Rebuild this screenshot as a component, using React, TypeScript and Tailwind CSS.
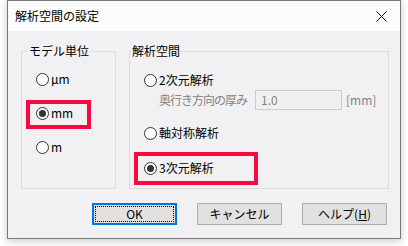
import React from 'react';

const font = { fontFamily: '"Noto Sans CJK JP", "Noto Sans", sans-serif' };

const Radio: React.FC<{ checked?: boolean; label: string }> = ({ checked = false, label }) => (
  <div className="flex items-center h-4">
    <span className="w-[13px] h-[13px] rounded-full border border-[#333333] bg-white flex items-center justify-center shrink-0">
      {checked && <span className="w-[7px] h-[7px] rounded-full bg-[#333333]" />}
    </span>
    <span className="ml-[2px] text-[12px] leading-4 text-black">{label}</span>
  </div>
);

const Button: React.FC<{ children: React.ReactNode; primary?: boolean }> = ({ children, primary }) => (
  <button
    className={`w-[85px] h-[22px] bg-[#e1e1e1] text-[12px] leading-4 text-black flex items-center justify-center ${
      primary ? 'border-2 border-[#0078d7] p-[1px]' : 'border border-[#adadad]'
    }`}
  >
    {primary ? (
      <span className="w-full h-full border border-dotted border-black flex items-center justify-center">{children}</span>
    ) : (
      children
    )}
  </button>
);

export default function App() {
  return (
    <div className="w-[408px] h-[246px] bg-white pl-[7px] overflow-hidden" style={font}>
      <div className="w-[394px] h-[239px] border border-[#7a7a7a] bg-[#f1f0f3] flex flex-col shadow-[0_2px_8px_rgba(0,0,0,0.22)]">
        {/* Title bar */}
        <div className="h-[30px] bg-[#fbfcfb] flex items-center justify-between pl-[7px] pr-[10px] shrink-0">
          <span className="text-[12px] leading-4 text-black">解析空間の設定</span>
          <svg width="11" height="11" viewBox="0 0 11 11" className="mr-[3px]">
            <path d="M0.5 0.5 L10.5 10.5 M10.5 0.5 L0.5 10.5" stroke="#111" strokeWidth="1" />
          </svg>
        </div>

        {/* Body */}
        <div className="flex-1 flex flex-col pt-[12px] pl-[13px] pr-[11px]">
          <div className="flex gap-[13px]">
            <fieldset className="relative w-[95px] h-[146px] border border-[#dcdcdc]">
              <legend className="ml-[5px] px-[2px] text-[12px] leading-4 text-black">モデル単位</legend>
              <div className="flex flex-col gap-[18px] pl-[14px] mt-[12px]">
                <Radio label="μm" />
                <Radio checked label="mm" />
                <Radio label="m" />
              </div>
              <div className="absolute left-[4px] top-[41px] w-[65px] h-[29px] border-4 border-[#f5093f]" />
            </fieldset>

            <fieldset className="relative w-[260px] h-[146px] border border-[#dcdcdc]">
              <legend className="ml-[1px] px-[1px] text-[12px] leading-4 text-black">解析空間</legend>
              <div className="flex flex-col pl-[14px] mt-[13px]">
                <Radio label="2次元解析" />
                <div className="flex items-center mt-[2px] pl-[15px] h-[20px]">
                  <span className="text-[12px] leading-4 text-[#838383] tracking-[-1px] w-[96px]">奥行き方向の厚み</span>
                  <div className="w-[87px] h-[20px] border border-[#cccccc] bg-[#f0f0f0] flex items-center pl-[5px] text-[12px] text-[#838383]">
                    1.0
                  </div>
                  <span className="ml-[4px] text-[12px] leading-4 text-[#838383]">[mm]</span>
                </div>
                <div className="mt-[15px]">
                  <Radio label="軸対称解析" />
                </div>
                <div className="mt-[19px]">
                  <Radio checked label="3次元解析" />
                </div>
              </div>
              <div className="absolute left-[4px] top-[93px] w-[124px] h-[33px] border-4 border-[#f5093f]" />
            </fieldset>
          </div>

          <div className="flex justify-end gap-[20px] mt-[14px] pr-[2px]">
            <Button primary>OK</Button>
            <Button>キャンセル</Button>
            <Button>
              <span>
                ヘルプ(<span className="underline">H</span>)
              </span>
            </Button>
          </div>
        </div>
      </div>
    </div>
  );
}
